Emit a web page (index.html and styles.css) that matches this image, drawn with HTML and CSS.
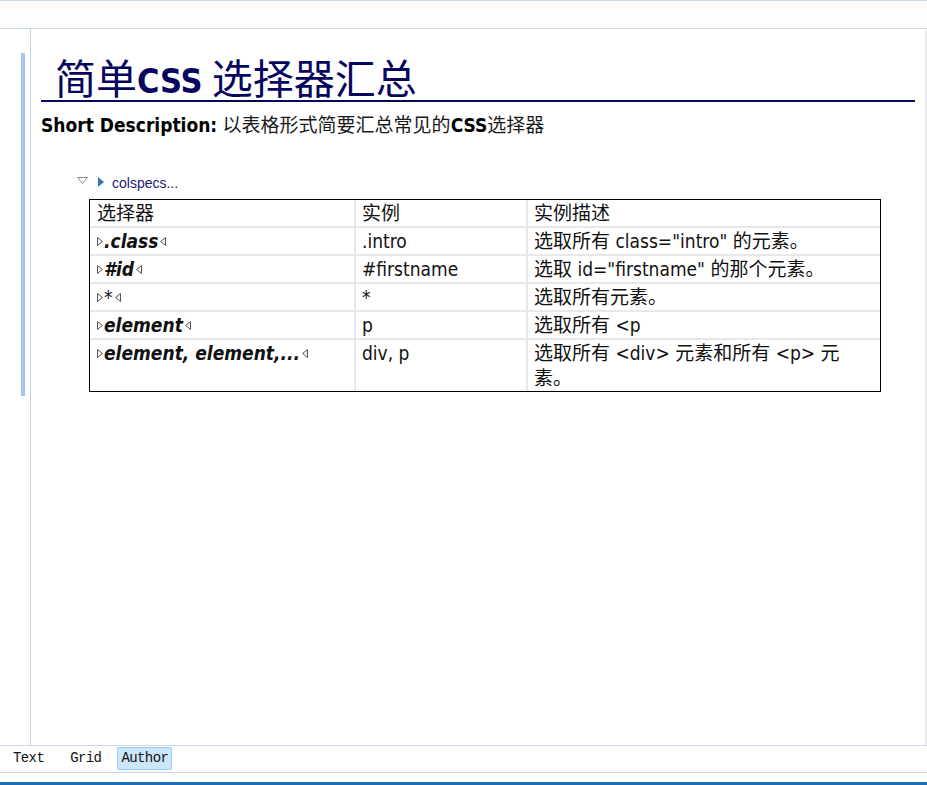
FILE: index.html
```html
<!DOCTYPE html>
<html lang="zh-CN">
<head>
<meta charset="utf-8">
<title>简单CSS 选择器汇总</title>
<link rel="stylesheet" href="styles.css">
</head>
<body>
<div class="app">
  <div class="topbar"></div>
  <div class="main">
    <div class="gutter"><div class="docbar"></div></div>
    <div class="content">
      <h1 class="title"><span class="zh">简单</span><span class="latin">CSS</span> <span class="zh">选择器汇总</span></h1>
      <p class="shortdesc"><b>Short Description:</b> 以表格形式简要汇总常见的<b>CSS</b>选择器</p>
      <div class="colspecs">
        <svg class="twisty" width="11" height="7" viewBox="0 0 11 7"><path d="M0.5 0.5 H10.5 L5.5 6.5 Z" fill="none" stroke="#8c8c8c"/></svg>
        <svg class="arrow" width="6" height="10" viewBox="0 0 6 10"><path d="M0 0 L6 5 L0 10 Z" fill="#3a74b6"/></svg>
        <span class="cs-label">colspecs...</span>
      </div>
      <div class="table">
        <div class="cell c1">选择器</div>
        <div class="cell">实例</div>
        <div class="cell">实例描述</div>

        <div class="cell c1"><svg class="mk" width="6" height="9" viewBox="0 0 6 9"><path d="M0.5 0.5 L5.5 4.5 L0.5 8.5 Z" fill="#f4f4f4" stroke="#555"/></svg><em>.class</em><svg class="mk" width="6" height="9" viewBox="0 0 6 9"><path d="M5.5 0.5 L0.5 4.5 L5.5 8.5 Z" fill="#f4f4f4" stroke="#555"/></svg></div>
        <div class="cell">.intro</div>
        <div class="cell">选取所有 class="intro" 的元素。</div>

        <div class="cell c1"><svg class="mk" width="6" height="9" viewBox="0 0 6 9"><path d="M0.5 0.5 L5.5 4.5 L0.5 8.5 Z" fill="#f4f4f4" stroke="#555"/></svg><em>#id</em><svg class="mk" width="6" height="9" viewBox="0 0 6 9"><path d="M5.5 0.5 L0.5 4.5 L5.5 8.5 Z" fill="#f4f4f4" stroke="#555"/></svg></div>
        <div class="cell">#firstname</div>
        <div class="cell">选取 id="firstname" 的那个元素。</div>

        <div class="cell c1"><svg class="mk" width="6" height="9" viewBox="0 0 6 9"><path d="M0.5 0.5 L5.5 4.5 L0.5 8.5 Z" fill="#f4f4f4" stroke="#555"/></svg><span class="star">*</span><svg class="mk" width="6" height="9" viewBox="0 0 6 9"><path d="M5.5 0.5 L0.5 4.5 L5.5 8.5 Z" fill="#f4f4f4" stroke="#555"/></svg></div>
        <div class="cell">*</div>
        <div class="cell">选取所有元素。</div>

        <div class="cell c1"><svg class="mk" width="6" height="9" viewBox="0 0 6 9"><path d="M0.5 0.5 L5.5 4.5 L0.5 8.5 Z" fill="#f4f4f4" stroke="#555"/></svg><em>element</em><svg class="mk" width="6" height="9" viewBox="0 0 6 9"><path d="M5.5 0.5 L0.5 4.5 L5.5 8.5 Z" fill="#f4f4f4" stroke="#555"/></svg></div>
        <div class="cell">p</div>
        <div class="cell">选取所有 &lt;p</div>

        <div class="cell c1"><svg class="mk" width="6" height="9" viewBox="0 0 6 9"><path d="M0.5 0.5 L5.5 4.5 L0.5 8.5 Z" fill="#f4f4f4" stroke="#555"/></svg><em>element, element,...</em><svg class="mk" width="6" height="9" viewBox="0 0 6 9"><path d="M5.5 0.5 L0.5 4.5 L5.5 8.5 Z" fill="#f4f4f4" stroke="#555"/></svg></div>
        <div class="cell">div, p</div>
        <div class="cell">选取所有 &lt;div&gt; 元素和所有 &lt;p&gt; 元素。</div>
      </div>
    </div>
    <div class="scroll"></div>
  </div>
  <div class="tabs">
    <span class="tab">Text</span>
    <span class="tab">Grid</span>
    <span class="tab active">Author</span>
  </div>
  <div class="statusgap"></div>
  <div class="statusbar"></div>
</div>
</body>
</html>
```

FILE: styles.css
```css
html, body {
  margin: 0;
  padding: 0;
}

body {
  width: 927px;
  height: 785px;
  overflow: hidden;
  background: #ffffff;
  font-family: "DejaVu Sans Condensed", "DejaVu Sans", "Noto Sans CJK SC", sans-serif;
  color: #000;
}

.app {
  display: flex;
  flex-direction: column;
  height: 785px;
}

.topbar {
  flex: 0 0 27px;
  border-top: 1px solid #cbd8e5;
  border-bottom: 1px solid #cbd8e5;
  background: #fdfdfd;
}

.main {
  flex: 0 0 716px;
  display: flex;
}

.gutter {
  width: 30px;
  border-right: 1px solid #c3d5ea;
}

.docbar {
  width: 4px;
  height: 343px;
  margin: 24px 0 0 21px;
  background: #a7c7ef;
}

.content {
  flex: 1;
  padding: 24px 10px 0 10px;
}

.scroll {
  width: 2px;
  background: #ececec;
}

.title {
  margin: 0;
  padding-left: 14px;
  height: 47px;
  line-height: 47px;
  border-bottom: 2px solid #06065e;
  color: #06065e;
  font-weight: normal;
  white-space: nowrap;
}

.title .zh {
  font-size: 41px;
  font-family: "Noto Sans CJK SC", sans-serif;
  vertical-align: -1px;
}

.title .latin {
  font-size: 34px;
  font-weight: bold;
}

.shortdesc {
  margin: 10px 0 0 0;
  font-size: 19px;
  line-height: 26px;
  color: #1a1a1a;
}

.shortdesc b {
  color: #000;
}

.colspecs {
  margin-top: 35px;
  padding-left: 36px;
  height: 20px;
  display: flex;
  align-items: center;
}

.twisty {
  margin-top: -6px;
}

.arrow {
  margin-left: 10px;
  margin-top: -3px;
}

.cs-label {
  margin-left: 8px;
  font-family: "Liberation Sans", Arial, sans-serif;
  font-size: 14px;
  color: #1c1c78;
}

.table {
  margin: 6px 0 0 48px;
  width: max-content;
  display: grid;
  grid-template-columns: 264px 170px 352px;
  gap: 2px;
  background: #e8e8e8;
  border: 1px solid #000;
}

.cell {
  background: #fff;
  font-size: 19px;
  line-height: 25px;
  padding: 1px 6px 0 6px;
  color: #111;
}

.cell.c1 {
  padding-left: 7px;
}

.cell em {
  font-style: italic;
  font-weight: bold;
}

.mk {
  vertical-align: 2px;
  margin-right: 1px;
}

em + .mk, .star + .mk {
  margin-left: 2px;
}

.tabs {
  flex: 0 0 28px;
  height: 28px;
  box-sizing: border-box;
  border-top: 1px solid #cbd8e5;
  border-bottom: 1px solid #cbd8e5;
  display: flex;
  align-items: flex-start;
  padding: 1px 0 0 9px;
}

.tab {
  font-family: "Liberation Mono", monospace;
  font-size: 14px;
  letter-spacing: -0.6px;
  line-height: 21px;
  padding: 0 3px;
  border: 1px solid transparent;
  border-radius: 2px;
  color: #111;
}

.tab:nth-child(1) {
  margin-right: 18px;
}

.tab:nth-child(2) {
  margin-right: 12px;
}

.tab.active {
  background: #cce6f9;
  border-color: #9ccbee;
}

.statusgap {
  flex: 0 0 9px;
}

.statusbar {
  flex: 0 0 3px;
  background: #1f6db6;
}
```
